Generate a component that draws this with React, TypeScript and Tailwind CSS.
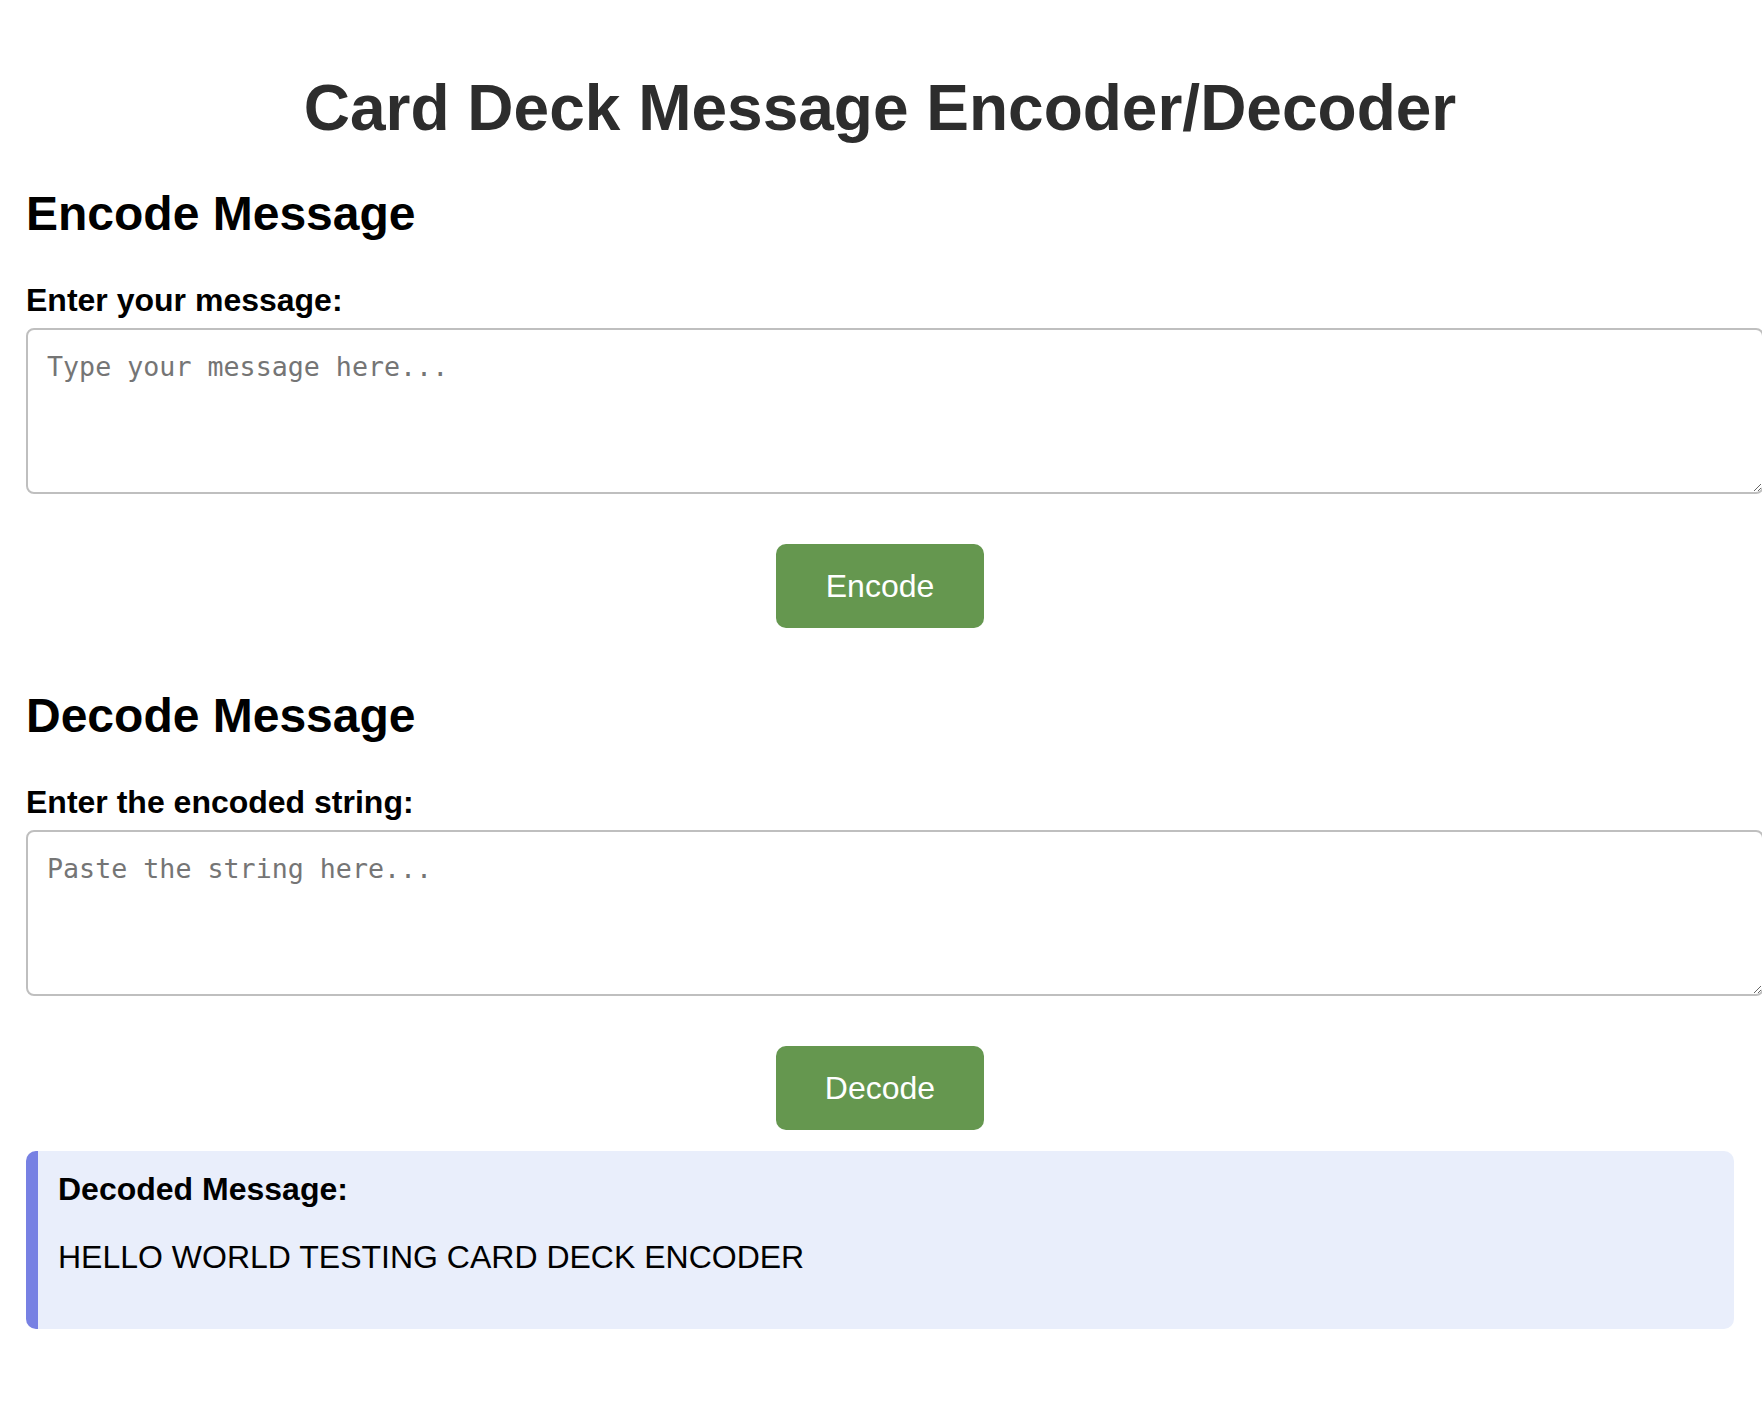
import { useState } from 'react'

function Section({
  title,
  label,
  placeholder,
  action,
  value,
  onChange,
  onClick,
  headingClass,
}: {
  title: string
  label: string
  placeholder: string
  action: string
  value: string
  onChange: (v: string) => void
  onClick: () => void
  headingClass: string
}) {
  return (
    <section>
      <h2 className={`${headingClass} text-[48px] leading-[55px] font-bold text-black`}>{title}</h2>
      <label className="mt-[41px] block text-[32px] leading-[37px] font-bold text-black">{label}</label>
      <textarea
        className="mt-[9px] block h-[166px] w-[1738px] rounded-[8px] border-2 border-[#bfbfbf] bg-white px-[19px] pt-[17px] pb-[20px] font-['DejaVu_Sans_Mono',monospace] text-[26.67px] text-black placeholder:text-[#757575] outline-none"
        placeholder={placeholder}
        value={value}
        onChange={(e) => onChange(e.target.value)}
      />
      <div className="mt-[50px] flex justify-center">
        <button
          onClick={onClick}
          className="h-[84px] w-[208px] rounded-[10px] bg-[#65974f] font-['Liberation_Sans',Arial,sans-serif] text-[32px] text-white"
        >
          {action}
        </button>
      </div>
    </section>
  )
}

export default function App() {
  const [message, setMessage] = useState('')
  const [encoded, setEncoded] = useState('')
  const [decoded] = useState('HELLO WORLD TESTING CARD DECK ENCODER')

  return (
    <div className="w-full overflow-hidden bg-white font-['Liberation_Sans',Arial,sans-serif]">
      <div className="w-[1708px] ml-[26px] pt-[71px] pb-[95px]">
        <h1 className="text-center text-[64px] leading-[74px] font-bold text-[#2d2d2d]">
          Card Deck Message Encoder/Decoder
        </h1>
        <Section
          title="Encode Message"
          label="Enter your message:"
          placeholder="Type your message here..."
          action="Encode"
          value={message}
          onChange={setMessage}
          onClick={() => {}}
          headingClass="mt-[41px]"
        />
        <Section
          title="Decode Message"
          label="Enter the encoded string:"
          placeholder="Paste the string here..."
          action="Decode"
          value={encoded}
          onChange={setEncoded}
          onClick={() => {}}
          headingClass="mt-[60px]"
        />
        <div className="mt-[21px] h-[178px] rounded-[10px] border-l-[12px] border-[#7781e3] bg-[#e9eefb] pl-[20px] pt-[20px]">
          <div className="text-[32px] leading-[37px] font-bold text-black">Decoded Message:</div>
          <p className="mt-[31px] text-[32px] leading-[37px] text-black">{decoded}</p>
        </div>
      </div>
    </div>
  )
}
